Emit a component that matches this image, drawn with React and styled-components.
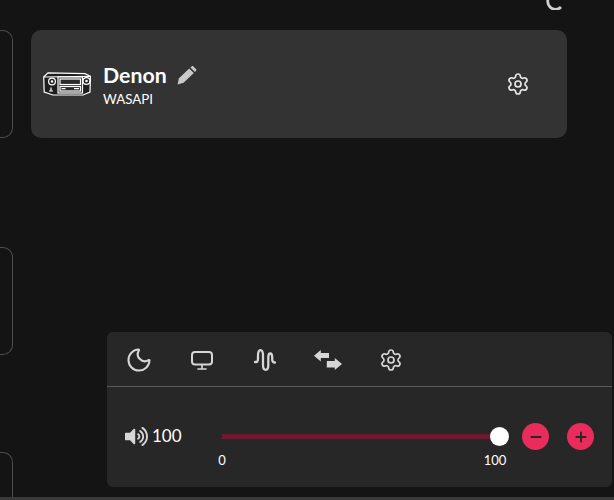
import React from 'react'
import styled, { createGlobalStyle } from 'styled-components'
import { Moon, Settings, Minus, Plus } from 'lucide-react'
import { FaVolumeUp } from 'react-icons/fa'

const GlobalStyle = createGlobalStyle`
  html, body {
    margin: 0;
    height: 100%;
    background: #141414;
    overflow: hidden;
  }
  body {
    font-family: Lato, "Liberation Sans", sans-serif;
    color: #fff;
  }
`

const Page = styled.div`
  position: relative;
  width: 614px;
  height: 500px;
  display: flex;
  background: #141414;
  overflow: hidden;
`

const SideColumn = styled.div`
  width: 13px;
  padding-top: 30px;
  display: flex;
  flex-direction: column;
`

const GhostCard = styled.div`
  flex: none;
  height: ${p => p.$height}px;
  margin-bottom: ${p => p.$after}px;
  border: 1px solid #4c4c4c;
  border-left: 0;
  border-radius: 0 10px 10px 0;
  box-sizing: border-box;
`

const Main = styled.div`
  padding: 30px 0 0 18px;
`

const DeviceCard = styled.div`
  width: 536px;
  height: 108px;
  box-sizing: border-box;
  padding: 0 37px 0 12px;
  display: flex;
  align-items: center;
  background: #333;
  border-radius: 10px;
`

const DeviceInfo = styled.div`
  margin-left: 12px;
  flex: 1;
  display: flex;
  flex-direction: column;
`

const NameRow = styled.div`
  display: flex;
  align-items: center;
  gap: 10px;
  height: 28px;
`

const DeviceName = styled.span`
  font-size: 21.3px;
  font-weight: 700;
`

const DeviceKind = styled.span`
  margin-top: 2px;
  font-size: 13.3px;
  line-height: 16px;
`

const Spinner = styled.svg`
  position: absolute;
  top: -8px;
  left: 546px;
`

const ControlPanel = styled.div`
  position: absolute;
  left: 107px;
  top: 332px;
  width: 505px;
  height: 155px;
  background: #272727;
  border-radius: 6px;
`

const Toolbar = styled.div`
  height: 55px;
  box-sizing: border-box;
  padding: 2px 0 0 21px;
  display: flex;
  align-items: center;
  gap: 41px;
  border-bottom: 1px solid #5a5a5a;
  color: #d6d6d6;
`

const ToolIcon = styled.span`
  width: 22px;
  height: 22px;
  display: flex;
  align-items: center;
  justify-content: center;

  & > svg {
    flex: none;
  }
`

const VolumeRow = styled.div`
  position: relative;
  height: 100px;
  padding: 0 0 0 18px;
  display: flex;
  align-items: flex-start;
`

const VolumeLabel = styled.div`
  width: 97px;
  height: 100px;
  box-sizing: border-box;
  padding-top: 38px;
  display: flex;
  align-items: flex-start;
  gap: 4px;
  font-size: 17px;
  line-height: 22px;
  color: #d6d6d6;
`

const VolumeValue = styled.span`
  color: #fff;
`

const SliderArea = styled.div`
  position: relative;
  width: 278px;
  height: 100px;
`

const Track = styled.div`
  position: absolute;
  left: 0;
  right: 0;
  top: 47px;
  height: 5px;
  background: #6d1a30;
`

const Thumb = styled.div`
  position: absolute;
  right: -9px;
  top: 40px;
  width: 19px;
  height: 19px;
  border-radius: 50%;
  background: #fff;
`

const Mark = styled.span`
  position: absolute;
  top: 65px;
  left: ${p => p.$left}px;
  transform: translateX(-50%);
  font-size: 13px;
  line-height: 16px;
`

const RoundButton = styled.button`
  flex: none;
  width: 27px;
  height: 27px;
  margin: 36px 0 0 ${p => p.$gap}px;
  padding: 0;
  border: 0;
  border-radius: 50%;
  display: flex;
  align-items: center;
  justify-content: center;
  background: #e92c5c;
  color: #272727;
`

const BottomEdge = styled.div`
  position: absolute;
  left: 0;
  right: 0;
  bottom: 0;
  height: 3px;
  background: #3a3a3a;
`

function ReceiverIcon() {
  return (
    <svg width="48" height="24" viewBox="0 0 48 24" fill="none" stroke="#fff" strokeWidth="1.2" style={{ flex: 'none' }}>
      <path d="M0.7 5 L5 0.8 L42 1.6 L47.4 4.4 L47 20 L40 23 L10 23 L1.2 20 Z" fill="#1e1e1e" />
      <path d="M0.7 5 L47.4 4.4" />
      <rect x="15" y="5" width="24.5" height="16" fill="#2a2a2a" />
      <rect x="17" y="7" width="20.5" height="5.5" />
      <rect x="17" y="14.5" width="20.5" height="4.5" />
      <path d="M18.5 16.7 h4 M31 16.7 h5" strokeWidth="1.3" />
      <circle cx="9" cy="9.5" r="3.4" />
      <circle cx="9" cy="9.5" r="1.3" fill="#fff" stroke="none" />
      <circle cx="43.5" cy="9" r="3.4" />
      <circle cx="43.5" cy="9" r="1.3" fill="#fff" stroke="none" />
      <path d="M8 15.5 v3 M6 19 h4" />
    </svg>
  )
}

function PencilIcon() {
  return (
    <svg width="20" height="19" viewBox="0 0 20 19" fill="#c9c9c9">
      <path d="M0.5 18.5 L2 12.2 L12.2 2.4 L16.8 7 L6.6 16.8 Z" />
      <path d="M13.4 1.4 L14.6 0.4 C15.2 -0.1 15.9 -0.1 16.4 0.4 L19 3 C19.5 3.5 19.5 4.2 19 4.8 L18 5.9 Z" />
    </svg>
  )
}

function MonitorIcon() {
  return (
    <svg width="22" height="19" viewBox="0 0 22 19" fill="none" stroke="currentColor" strokeWidth="2" strokeLinecap="round">
      <rect x="1" y="1" width="20" height="12.5" rx="3" />
      <path d="M11 14 V18 M7 18 H15" strokeWidth="1.7" />
    </svg>
  )
}

function WaveIcon() {
  return (
    <svg width="22" height="22" viewBox="0 0 22 22" fill="none" stroke="currentColor" strokeWidth="2.3" strokeLinecap="round" strokeLinejoin="round">
      <path d="M1 13 H2.5 C4 13 4 10.5 4 7 C4 3.5 4.8 1.2 6.5 1.2 C8.2 1.2 9 3.5 9 7 V16 C9 19 10 20.8 11.7 20.8 C13.4 20.8 14.3 19 14.3 16 V8.5 C14.3 5.8 15 4.5 16.3 4.5 C17.6 4.5 18.2 5.8 18.2 8.5 V10.5 C18.2 12.5 19 13.5 21 13.5" />
    </svg>
  )
}

function SwapIcon() {
  return (
    <svg width="28" height="20" viewBox="0 0 28 20" fill="currentColor">
      <path d="M0 5.7 L6.8 0 V3 H15 V8 H6.8 V11.6 Z" />
      <path d="M28 14 L20.8 8 V11 H12.8 V17.5 H20.8 V20 Z" />
    </svg>
  )
}

export default function App() {
  return (
    <Page>
      <GlobalStyle />
      <SideColumn>
        <GhostCard $height={108} $after={109} />
        <GhostCard $height={108} $after={97} />
        <GhostCard $height={108} $after={0} />
      </SideColumn>
      <Main>
        <DeviceCard>
          <ReceiverIcon />
          <DeviceInfo>
            <NameRow>
              <DeviceName>Denon</DeviceName>
              <PencilIcon />
            </NameRow>
            <DeviceKind>WASAPI</DeviceKind>
          </DeviceInfo>
          <Settings size={24} color="#e6e6e6" strokeWidth={1.7} />
        </DeviceCard>
      </Main>
      <Spinner width="24" height="18" viewBox="0 0 24 18" fill="none" stroke="#d0d0d0" strokeWidth="2.8">
        <path d="M4 4 A7.5 7.5 0 0 0 15 15" />
      </Spinner>
      <ControlPanel>
        <Toolbar>
          <ToolIcon><Moon size={28} strokeWidth={1.8} /></ToolIcon>
          <ToolIcon><MonitorIcon /></ToolIcon>
          <ToolIcon><WaveIcon /></ToolIcon>
          <ToolIcon><SwapIcon /></ToolIcon>
          <ToolIcon><Settings size={24} strokeWidth={1.7} /></ToolIcon>
        </Toolbar>
        <VolumeRow>
          <VolumeLabel>
            <FaVolumeUp size={23} />
            <VolumeValue>100</VolumeValue>
          </VolumeLabel>
          <SliderArea>
            <Track />
            <Thumb />
            <Mark $left={0}>0</Mark>
            <Mark $left={273}>100</Mark>
          </SliderArea>
          <RoundButton $gap={22} aria-label="Volume down"><Minus size={16} strokeWidth={2.8} /></RoundButton>
          <RoundButton $gap={18} aria-label="Volume up"><Plus size={16} strokeWidth={2.8} /></RoundButton>
        </VolumeRow>
      </ControlPanel>
      <BottomEdge />
    </Page>
  )
}
